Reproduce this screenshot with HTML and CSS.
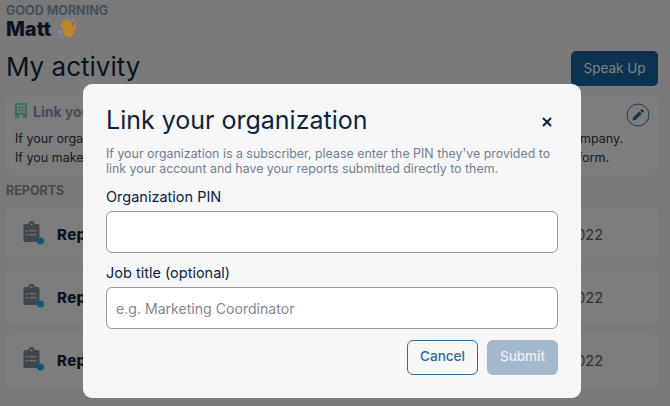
FILE: index.html
```html
<!DOCTYPE html>
<html lang="en">
<head>
    <meta charset="UTF-8">
    <meta name="viewport" content="width=device-width, initial-scale=1.0">
    <title>My activity</title>
    <link rel="stylesheet" href="styles.css">
</head>
<body>
    <div class="page">
        <div class="greeting">GOOD MORNING</div>
        <div class="user-name">
            Matt
            <svg class="wave" viewBox="0 0 20 20" width="20" height="20">
                <g stroke="#bd8726" stroke-width="3" stroke-linecap="round" fill="none">
                    <path d="M8 11 L4.800 6.500"/>
                    <path d="M9.500 10 L6.800 3.800"/>
                    <path d="M11.500 9.500 L9.800 2.500"/>
                    <path d="M13.500 10 L12.800 4"/>
                    <path d="M15.500 13 L17.800 8"/>
                </g>
                <ellipse cx="11.500" cy="13.500" rx="5.500" ry="5.800" fill="#bd8726"/>
                <path d="M1 13 L3 16 M3 12.800 L4.500 15 M4 18 L6 19.300 M15 1 L17.500 2 M17.800 4 L19 5" stroke="#a4a7aa" stroke-width="0.9" fill="none"/>
            </svg>
        </div>
        <div class="title-row">
            <h1>My activity</h1>
            <button class="speak-up">Speak Up</button>
        </div>

        <div class="card link-card">
            <div class="link-head">
                <svg viewBox="0 0 12 15" width="12" height="15"><path fill="#7ae6b4" fill-rule="evenodd" d="M1 0h10a1 1 0 0 1 1 1v14H8v-3H4v3H0V1a1 1 0 0 1 1-1zM2 2v2h2V2zm3 0v2h2V2zm3 0v2h2V2zM2 5v2h2V5zm3 0v2h2V5zm3 0v2h2V5zM2 8v2h2V8zm3 0v2h2V8zm3 0v2h2V8z"/></svg>
                <span>Link your organization</span>
                <svg class="edit" viewBox="0 0 24 24" width="24" height="24">
                    <circle cx="12" cy="12" r="11" fill="none" stroke="#2f7cb5" stroke-width="1"/>
                    <path fill="#2a6a9c" d="M6.500 17.500l.8-3.200 6-6 2.400 2.400-6 6zM14.200 7.400l.9-.9a1 1 0 0 1 1.400 0l1 1a1 1 0 0 1 0 1.400l-.9.9z"/>
                </svg>
            </div>
            <p class="line-one"><span>If your organization is a subscriber</span><span>your company.</span></p>
            <p class="line-two"><span>If you make a report</span><span>our form.</span></p>
        </div>

        <div class="section-label">REPORTS</div>
        <div class="report-list">
            <div class="card report">
                <svg class="clip" viewBox="0 0 22 24" width="22" height="24"><use href="#clip"/></svg>
                <span class="report-name">Report</span>
                <span class="report-date">Jan 12, 2022</span>
            </div>
            <div class="card report">
                <svg class="clip" viewBox="0 0 22 24" width="22" height="24"><use href="#clip"/></svg>
                <span class="report-name">Report</span>
                <span class="report-date">Jan 12, 2022</span>
            </div>
            <div class="card report">
                <svg class="clip" viewBox="0 0 22 24" width="22" height="24"><use href="#clip"/></svg>
                <span class="report-name">Report</span>
                <span class="report-date">Jan 12, 2022</span>
            </div>
        </div>
    </div>

    <svg class="defs" width="0" height="0">
        <symbol id="clip" viewBox="0 0 22 24">
            <path fill="#808e9a" fill-rule="evenodd" d="M2 3h3.500a3 3 0 0 1 6 0H15a1.500 1.500 0 0 1 1.500 1.500V19.500A1.500 1.500 0 0 1 15 21H2A1.500 1.500 0 0 1 .5 19.500V4.500A1.500 1.500 0 0 1 2 3zm5.500-.5h2V4h-2zM3 9v1.500h1.500V9zm3 .2v1h7.500v-1zM3 13v1.500h1.500V13zm3 .2v1h7.500v-1z"/>
            <circle cx="17.500" cy="20" r="3.500" fill="#1ab4f0"/>
        </symbol>
    </svg>

    <div class="overlay">
        <div class="modal">
            <div class="modal-head">
                <h2>Link your organization</h2>
                <svg class="close" viewBox="0 0 10 10" width="10" height="10"><path d="M1 1l8 8M9 1l-8 8" stroke="#0c2340" stroke-width="2" fill="none"/></svg>
            </div>
            <p class="modal-text">If your organization is a subscriber, please enter the PIN they've provided to link your account and have your reports submitted directly to them.</p>
            <label class="field-label">Organization PIN</label>
            <input class="field" type="text">
            <label class="field-label job-label">Job title (optional)</label>
            <input class="field" type="text" placeholder="e.g. Marketing Coordinator">
            <div class="modal-actions">
                <button class="btn btn-cancel">Cancel</button>
                <button class="btn btn-submit">Submit</button>
            </div>
        </div>
    </div>
</body>
</html>
```

FILE: styles.css
```css
* {
    box-sizing: border-box;
}
html, body {
    height: 100%;
}
body {
    margin: 0;
    overflow: hidden;
    background-color: #f4f4f4;
    font-family: Inter, "Noto Sans", sans-serif;
    color: #14283c;
}
.page {
    padding: 3px 12px 0 6px;
}
.greeting {
    font-size: 12.500px;
    line-height: 15px;
    font-weight: 700;
    color: #8a9fb2;
}
.user-name {
    display: flex;
    align-items: center;
    gap: 6px;
    height: 22px;
    font-size: 20px;
    font-weight: 800;
}
.wave {
    position: relative;
    z-index: 2;
    margin-top: -3px;
}
.title-row {
    display: flex;
    justify-content: space-between;
    align-items: flex-start;
    margin-top: 7px;
}
h1 {
    margin: 2px 0 0;
    font-size: 26px;
    line-height: 36px;
    font-weight: 400;
}
.speak-up {
    width: 87px;
    height: 35px;
    margin-top: 4px;
    padding: 0 0 2px;
    border: 0;
    border-radius: 5px;
    background-color: #17669f;
    color: #fff;
    font-family: inherit;
    font-size: 13.500px;
}
.card {
    background-color: #fbfbfb;
    border-radius: 8px;
}
.link-card {
    height: 79px;
    margin-top: 10px;
    padding: 7px 35px 0 9px;
}
.link-head {
    display: flex;
    align-items: flex-start;
    gap: 6px;
    height: 16px;
    font-size: 14px;
    font-weight: 700;
    color: #8a9fb2;
}
.edit {
    margin-left: auto;
    margin-right: -27px;
}
.link-card p {
    display: flex;
    justify-content: space-between;
    margin: 0;
    font-size: 12.500px;
    line-height: 19px;
    color: #2a3644;
    white-space: nowrap;
}
.link-card .line-one {
    margin-top: 10px;
}
.link-card .line-two {
    width: 594px;
}
.section-label {
    margin-top: 8px;
    font-size: 12.500px;
    line-height: 16px;
    font-weight: 700;
    color: #8a929a;
}
.report-list {
    display: flex;
    flex-direction: column;
    gap: 8px;
    margin-top: 8px;
}
.report {
    display: flex;
    align-items: center;
    height: 55px;
    padding: 0 55px 0 17px;
}
.clip {
    margin-top: -3px;
}
.report-name {
    margin-left: 12px;
    font-size: 15px;
    font-weight: 800;
    letter-spacing: 0.4px;
}
.report-date {
    margin-left: auto;
    font-size: 14.500px;
    color: #5c6670;
}
.defs {
    position: absolute;
}
.overlay {
    position: fixed;
    inset: 0;
    padding: 84px 89px 8px 83px;
    background-color: rgba(0, 0, 0, 0.5);
}
.modal {
    height: 314px;
    padding: 19px 23px 0;
    background-color: #f7f7f7;
    border-radius: 9px;
}
.modal-head {
    display: flex;
    justify-content: space-between;
    align-items: center;
}
h2 {
    margin: 0;
    font-size: 25px;
    line-height: 34px;
    font-weight: 400;
    color: #0c2340;
}
.close {
    margin-right: 6px;
    margin-top: 4px;
}
.modal-text {
    margin: 9px 0 0;
    font-size: 12.400px;
    line-height: 15px;
    color: #6f7f90;
}
.field-label {
    display: block;
    margin-top: 11px;
    font-size: 14.500px;
    line-height: 19px;
    color: #0c2340;
}
.job-label {
    margin-top: 10px;
}
.field {
    display: block;
    width: 100%;
    height: 42px;
    margin-top: 5px;
    padding: 0 9px;
    background-color: #fff;
    border: 1px solid #999;
    border-radius: 6px;
    font-family: inherit;
    font-size: 14.100px;
}
.field::placeholder {
    color: #85888c;
}
.modal-actions {
    display: flex;
    justify-content: flex-end;
    gap: 9px;
    margin-top: 11px;
}
.btn {
    width: 71px;
    height: 35px;
    padding: 0 0 3px;
    border-radius: 6px;
    font-family: inherit;
    font-size: 13.500px;
    font-weight: 500;
}
.btn-cancel {
    background-color: transparent;
    border: 1px solid #2f6c9c;
    color: #2f6c9c;
}
.btn-submit {
    background-color: #a3b8cb;
    border: 0;
    color: #edf1f5;
}
```
